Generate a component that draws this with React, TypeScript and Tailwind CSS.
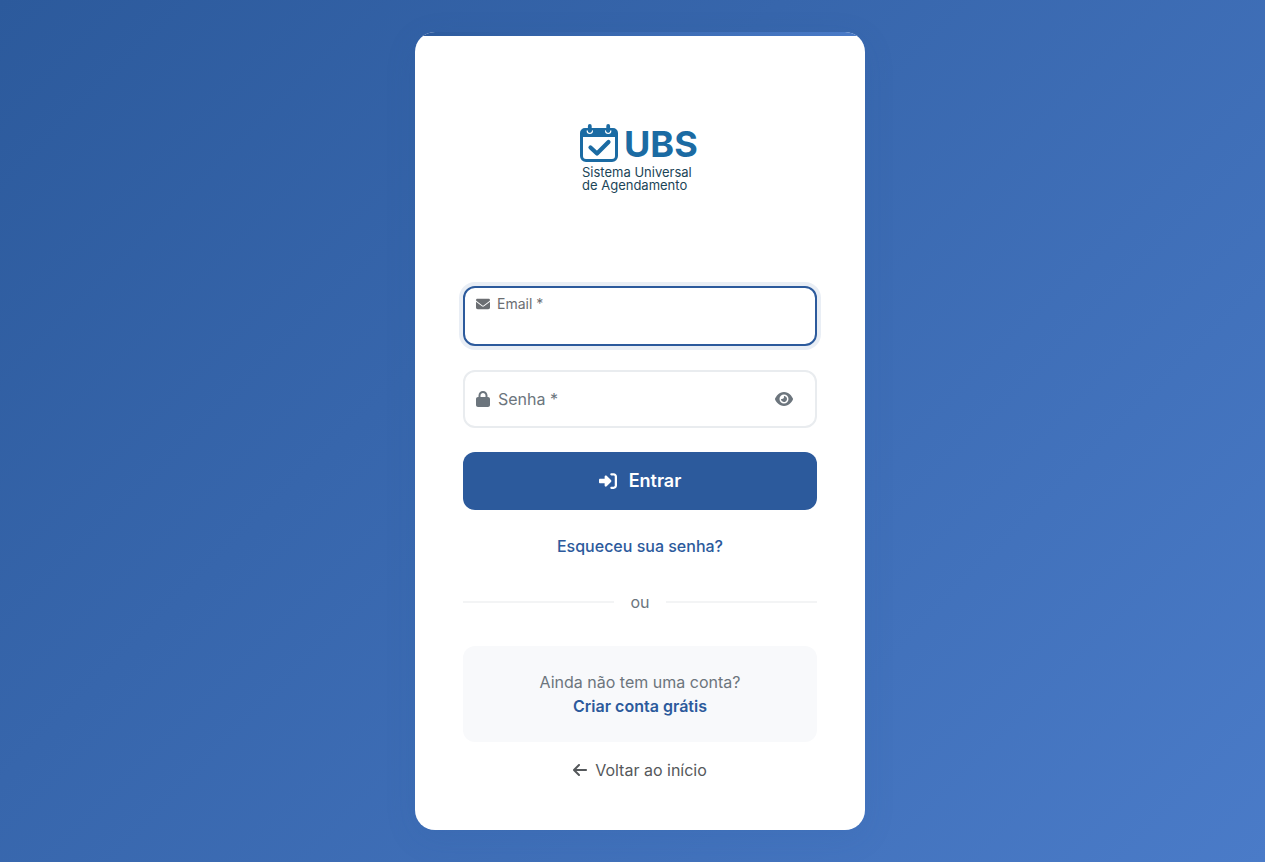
import { useState } from "react";
import {
  FaArrowLeft,
  FaEnvelope,
  FaEye,
  FaEyeSlash,
  FaLock,
  FaRightToBracket,
} from "react-icons/fa6";

function Logo() {
  return (
    <div className="flex w-[120px] flex-col text-[#1b4557]">
      <div className="flex h-[38px] items-end gap-[6px] text-[#1b6ba3]">
        <svg viewBox="0 0 38 38" className="h-[38px] w-[38px] shrink-0" aria-hidden="true">
          <path
            fill="currentColor"
            fillRule="evenodd"
            d="M5 4H33a5 5 0 0 1 5 5V32a6 6 0 0 1-6 6H6a6 6 0 0 1-6-6V9a5 5 0 0 1 5-5ZM3 13V32a3 3 0 0 0 3 3H32a3 3 0 0 0 3-3V13Z"
          />
          <path
            d="M7.2 6.8a2.6 2.6 0 0 0 5.2 0M25.6 6.8a2.6 2.6 0 0 0 5.2 0"
            fill="none"
            stroke="#fff"
            strokeWidth="1.2"
            strokeLinecap="round"
          />
          <path
            d="M9.8 2V6.6M28.2 2V6.6"
            stroke="currentColor"
            strokeWidth="3.8"
            strokeLinecap="round"
          />
          <path
            d="M10.5 23.5L17 29.5L28.5 18"
            fill="none"
            stroke="currentColor"
            strokeWidth="4.2"
            strokeLinecap="round"
            strokeLinejoin="round"
          />
        </svg>
        <span className="text-[36px] leading-9 font-bold">UBS</span>
      </div>
      <p className="mt-1 pl-0.5 text-[13px] leading-[13px] whitespace-nowrap">
        Sistema Universal
        <br />
        de Agendamento
      </p>
    </div>
  );
}

export default function App() {
  const [visible, setVisible] = useState(false);

  return (
    <main className="flex min-h-screen items-center justify-center bg-linear-135 from-[#2c5a9c] to-[#4a7bc8] py-8 pr-[17px] pl-8 font-['Inter',sans-serif] text-base">
      <section className="relative w-full max-w-[450px] overflow-hidden rounded-[20px] bg-white px-12 pb-12 shadow-[0_8px_32px_rgba(44,90,156,0.12)]">
        <div className="absolute inset-x-0 top-0 h-1 bg-linear-to-r from-[#2c5a9c] to-[#4a7bc8]" />
        <header className="flex justify-center pt-[92px] pb-[94px]">
          <Logo />
        </header>

        <form className="flex flex-col gap-6" onSubmit={(e) => e.preventDefault()}>
          <div className="relative">
            <input
              id="email"
              type="email"
              required
              className="block h-[60px] w-full rounded-xl border-2 border-[#2c5a9c] bg-white px-3 pt-6 pb-2 text-[#212529] shadow-[0_0_0_4px_rgba(44,90,156,0.1)] outline-none"
            />
            <label
              htmlFor="email"
              className="pointer-events-none absolute top-2 left-[13px] flex items-center gap-[7px] text-[14px] leading-5 text-[#6b6e72]"
            >
              <FaEnvelope className="size-[14px]" />
              Email *
            </label>
          </div>

          <div className="relative">
            <input
              id="senha"
              type={visible ? "text" : "password"}
              required
              className="peer block h-[58px] w-full rounded-xl border-2 border-[#e9ecef] bg-white pr-14 pl-9 text-[#212529] outline-none focus:border-[#2c5a9c]"
            />
            <label
              htmlFor="senha"
              className="pointer-events-none absolute inset-y-0 left-[13px] flex items-center gap-2 text-[#6c757d] peer-valid:invisible"
            >
              <FaLock className="h-4 w-[14px]" />
              Senha *
            </label>
            <button
              type="button"
              aria-label="Mostrar senha"
              onClick={() => setVisible(!visible)}
              className="absolute inset-y-0 right-6 flex items-center text-[#6c757d]"
            >
              {visible ? <FaEyeSlash className="h-4 w-[18px]" /> : <FaEye className="h-4 w-[18px]" />}
            </button>
          </div>

          <button
            type="submit"
            className="flex h-[58px] items-center justify-center gap-3 rounded-xl bg-[#2c5a9c] text-lg font-semibold text-white"
          >
            <FaRightToBracket className="size-[18px]" />
            Entrar
          </button>
        </form>

        <div className="mt-6 text-center leading-6">
          <a href="#recuperar" className="font-medium text-[#2c5a9c]">
            Esqueceu sua senha?
          </a>
        </div>

        <div className="my-8 flex items-center gap-4 leading-6 text-[#6c757d]">
          <span className="h-0.5 flex-1 bg-[#f3f4f5]" />
          ou
          <span className="h-0.5 flex-1 bg-[#f3f4f5]" />
        </div>

        <div className="rounded-xl bg-[#f8f9fb] p-6 text-center leading-6 text-[#6c757d]">
          <p>Ainda não tem uma conta?</p>
          <a href="#cadastro" className="font-semibold text-[#2c5a9c]">
            Criar conta grátis
          </a>
        </div>

        <div className="mt-4 flex justify-center">
          <a href="#inicio" className="flex items-center gap-2 leading-6 text-[#55585b]">
            <FaArrowLeft className="h-4 w-[14px]" />
            Voltar ao início
          </a>
        </div>
      </section>
    </main>
  );
}
